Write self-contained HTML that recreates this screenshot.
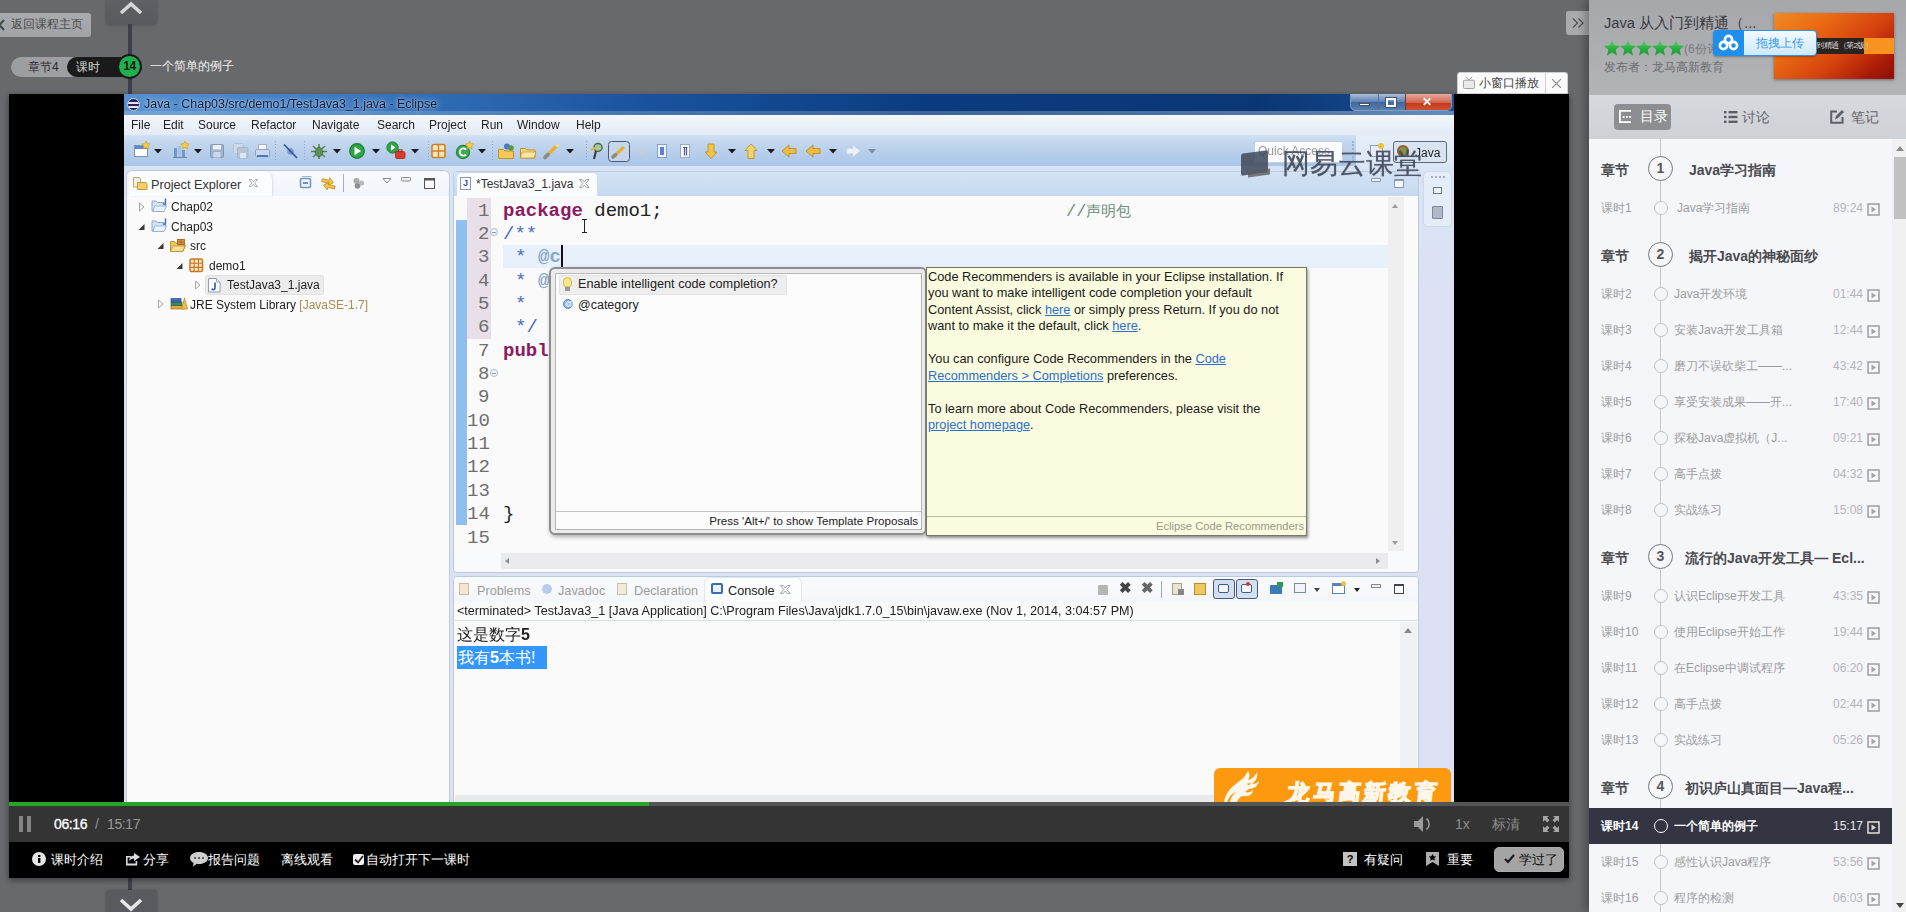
<!DOCTYPE html>
<html>
<head>
<meta charset="utf-8">
<title>Java</title>
<style>
*{box-sizing:border-box;margin:0;padding:0}
html,body{width:1906px;height:912px;overflow:hidden}
body{font-family:"Liberation Sans",sans-serif;font-size:13px;color:#333;position:relative;
background:#68696d}
.abs{position:absolute}
/* top-left */
#back{left:-4px;top:13px;width:95px;height:24px;background:linear-gradient(180deg,#a9aaad,#a2a3a6);border-radius:3px;color:#494b4f;font-size:12px;line-height:23px;padding-left:15px}
#uptab{left:106px;top:-4px;width:51px;height:29px;background:linear-gradient(180deg,#606166,#595a5f);border-radius:4px;box-shadow:0 0 3px rgba(0,0,0,.25)}
#vline1{left:128px;top:24px;width:4px;height:70px;background:#3e3f4b}
#vline2{left:128px;top:878px;width:4px;height:14px;background:#3e3f4b}
#downtab{left:106px;top:890px;width:51px;height:28px;background:#5a5b60;border-radius:4px;box-shadow:0 0 3px rgba(0,0,0,.25)}
#chap{left:11px;top:57px;width:70px;height:20px;background:#9d9ea1;border-radius:10px;color:#2b2c31;font-size:12px;line-height:20px;padding-left:17px}
#less{left:67px;top:57px;width:70px;height:20px;background:#1a1a1a;border-radius:10px;color:#d8d8d8;font-size:12px;line-height:20px;padding-left:9px}
#num{left:117px;top:54px;width:25px;height:25px;border-radius:50%;background:#21b04e;border:2px solid #1a1a1a;color:#0d1a10;font-size:12px;font-weight:bold;line-height:21px;text-align:center;letter-spacing:-.3px}
#ltitle{left:150px;top:58px;color:#f2f2f2;font-size:12px;line-height:17px}

/* eclipse */
#eclipse{left:124px;top:94px;width:1330px;height:708px;overflow:hidden;background:linear-gradient(180deg,#d3e2f4 0,#d9e4f5 14%,#dde1f3 28%,#dde0f3 100%)}
#ec{position:absolute;left:-124px;top:-94px;width:1906px;height:912px;font-size:12px;color:#222;filter:blur(.45px)}
#ec div,#ec span,#ec i,#ec b{position:absolute}
#ec .t{white-space:nowrap;line-height:16px}
#etitle{left:124px;top:94px;width:1330px;height:21px;background:linear-gradient(90deg,#5590cf 0,#3d7bc2 14%,#19529c 40%,#0c3c80 60%,#0a3674 85%,#1a4f92 100%)}
#emenu{left:124px;top:115px;width:1330px;height:20px;background:linear-gradient(180deg,#f4f7fc,#e3ebf6)}
#etool{left:124px;top:135px;width:1330px;height:31px;background:linear-gradient(180deg,#d3e2f4 0,#c2d6ee 25%,#a9c5e7 100%)}
.panel{background:#fbfbfb;border:1px solid #b9cbe0;border-radius:4px}
#ec .code{font-family:"Liberation Mono",monospace;font-size:19px;line-height:24px;margin-top:1px}
#ec .kw{position:static;color:#8b1a62;font-weight:bold}
#ec .lk{position:static;color:#2a6fd0;text-decoration:underline}
#ec .doc{font-size:12.75px;color:#1a1a1a}
/* video frame */
#vwrap{left:9px;top:94px;width:1560px;height:784px;background:#000;box-shadow:0 2px 6px rgba(0,0,0,.45)}
#ctrl{left:0;top:708px;width:1560px;height:40px;background:#343434}
#prog{left:0;top:0;width:1560px;height:4px;background:#555}
#prog i{display:block;width:640px;height:4px;background:#29a329}
#tool{left:0;top:748px;width:1560px;height:36px;background:#000;color:#fff;font-size:13px}
.tl{top:9px;font-size:13px;line-height:17px;color:#fff;white-space:nowrap}
/* mini window tab */
#mini{left:1457px;top:72px;width:111px;height:22px;background:#fafafa;border:1px solid #d0d0d0;border-radius:3px 3px 0 0;font-size:12px;color:#444;line-height:20px}
/* sidebar */
#side{left:1589px;top:0;width:317px;height:912px;background:#f5f6fa;box-shadow:-3px 0 9px rgba(0,0,0,.33)}
#shead{left:0;top:0;width:317px;height:95px;background:linear-gradient(180deg,#a6a7ab,#b3b4b8)}
#stabs{left:0;top:95px;width:317px;height:44px;background:linear-gradient(180deg,#d6d9de,#ced1d6)}
#toggle{left:1566px;top:11px;width:24px;height:24px;background:#a9aaad;border-radius:3px 0 0 3px}
</style>
</head>
<body>
<div id="back" class="abs"><svg class="abs" style="left:2px;top:6px" width="7" height="12" viewBox="0 0 7 12"><path d="M6 1L1.500 6 6 11" stroke="#4a4c50" stroke-width="2.200" fill="none"/></svg>返回课程主页</div>
<div id="uptab" class="abs"><svg class="abs" style="left:13px;top:5px" width="24" height="14" viewBox="0 0 24 14"><path d="M2 12L12 3l10 9" stroke="#d6d6d8" stroke-width="3.600" fill="none"/></svg></div>
<div id="vline1" class="abs"></div>
<div id="vline2" class="abs"></div>
<div id="downtab" class="abs"><svg class="abs" style="left:13px;top:8px" width="24" height="14" viewBox="0 0 24 14"><path d="M2 2l10 9 10-9" stroke="#e8e8e8" stroke-width="3.600" fill="none"/></svg></div>
<div id="chap" class="abs">章节4</div>
<div id="less" class="abs">课时</div>
<div id="num" class="abs">14</div>
<div id="ltitle" class="abs">一个简单的例子</div>

<div id="vwrap" class="abs">
  
  <div id="ctrl" class="abs"><div id="prog" class="abs"><i></i></div>
<i class="abs" style="left:10px;top:14px;width:4px;height:16px;background:#858585"></i><i class="abs" style="left:18px;top:14px;width:4px;height:16px;background:#858585"></i>
<div class="abs" style="left:45px;top:13px;font-size:14px;line-height:18px;color:#fff;letter-spacing:-.4px;white-space:nowrap;-webkit-text-stroke:.3px #fff">06:16</div>
<div class="abs" style="left:86px;top:13px;font-size:14px;line-height:18px;color:#8f8f8f;white-space:nowrap">/</div>
<div class="abs" style="left:98px;top:13px;font-size:14px;line-height:18px;color:#9a9a9a;letter-spacing:-.4px;white-space:nowrap">15:17</div>
<svg class="abs" style="left:1404px;top:12px" width="20" height="20" viewBox="0 0 20 20"><path d="M1 7h4l5-5v16l-5-5H1z" fill="#9a9a9a"/><path d="M13.5 4.5a7 7 0 0 1 0 11" fill="none" stroke="#9a9a9a" stroke-width="1.6"/></svg>
<div class="abs" style="left:1446px;top:13px;font-size:14px;line-height:18px;color:#8c8c8c">1x</div>
<div class="abs" style="left:1483px;top:13px;font-size:14px;line-height:18px;color:#8c8c8c;white-space:nowrap">标清</div>
<svg class="abs" style="left:1534px;top:14px" width="16" height="16" viewBox="0 0 19 19" fill="#a6a6a6"><path d="M0 0h7L4.8 2.2 7.6 5 5 7.6 2.2 4.8 0 7zM19 0v7l-2.2-2.2L14 7.6 11.4 5l2.8-2.8L12 0zM0 19v-7l2.2 2.2L5 11.4 7.6 14l-2.8 2.8L7 19zM19 19h-7l2.2-2.2-2.8-2.8 2.6-2.6 2.8 2.8L19 12z"/></svg>
</div>
  <div id="tool" class="abs">
<svg class="abs" style="left:23px;top:10px" width="14" height="14" viewBox="0 0 14 14"><circle cx="7" cy="7" r="7" fill="#e6e6e6"/><rect x="6" y="6" width="2.4" height="5" fill="#000"/><rect x="6" y="3" width="2.4" height="2" fill="#000"/></svg>
<div class="abs tl" style="left:42px">课时介绍</div>
<svg class="abs" style="left:116px;top:11px" width="15" height="13" viewBox="0 0 15 13"><path d="M1 3h5v1.6H2.6v6h8V8h1.6v4.6H1z" fill="#ddd"/><path d="M9 0l6 4-6 4V5.4C6.5 5.4 5 6.5 4 8.5 4.2 5 6 2.8 9 2.6z" fill="#ddd"/></svg>
<div class="abs tl" style="left:134px">分享</div>
<svg class="abs" style="left:181px;top:10px" width="18" height="15" viewBox="0 0 18 15"><path d="M9 0c5 0 9 2.6 9 6s-4 6-9 6c-.8 0-1.5 0-2.2-.2L3 14.5l.6-3.6C1.400 9.800 0 8 0 6c0-3.400 4-6 9-6z" fill="#d0d0d0"/><circle cx="5" cy="6" r="1.100" fill="#444"/><circle cx="9" cy="6" r="1.100" fill="#444"/><circle cx="13" cy="6" r="1.100" fill="#444"/></svg>
<div class="abs tl" style="left:199px">报告问题</div>
<div class="abs tl" style="left:272px">离线观看</div>
<div class="abs" style="left:344px;top:12px;width:11px;height:11px;background:#f2f2f2;border-radius:2px"></div>
<svg class="abs" style="left:345px;top:13px" width="10" height="9" viewBox="0 0 10 9"><path d="M1 4.500l3 3 5-6.500" stroke="#222" stroke-width="1.800" fill="none"/></svg>
<div class="abs tl" style="left:357px">自动打开下一课时</div>
<div class="abs" style="left:1334px;top:10px;width:14px;height:14px;background:#c2c2c2;color:#000;font-size:11px;font-weight:bold;line-height:14px;text-align:center">?</div>
<div class="abs tl" style="left:1355px">有疑问</div>
<svg class="abs" style="left:1417px;top:10px" width="13" height="14" viewBox="0 0 13 14"><path d="M0 0h13v14l-6.500-4L0 14z" fill="#adadad"/><path d="M6.500 2l1.200 2.300 2.500.3-1.800 1.700.5 2.500-2.400-1.300-2.400 1.300.5-2.500L2.800 4.600l2.500-.3z" fill="#000"/></svg>
<div class="abs tl" style="left:1438px">重要</div>
<div class="abs" style="left:1485px;top:5px;width:70px;height:25px;background:#a4a4a4;border:1px solid #acacac;border-radius:5px"></div>
<svg class="abs" style="left:1495px;top:12px" width="11" height="10" viewBox="0 0 11 10"><path d="M1 5l3 3 6-7" stroke="#1a1a1a" stroke-width="2.200" fill="none"/></svg>
<div class="abs" style="left:1510px;top:9px;font-size:13px;line-height:17px;color:#111;white-space:nowrap">学过了</div>
</div>
</div>
<div id="eclipse" class="abs"><div id="ec">
<div id="etitle"></div><div style="left:124px;top:111px;width:1330px;height:4px;background:linear-gradient(90deg,rgba(200,220,245,.25),rgba(150,178,212,.35) 60%,rgba(150,178,212,.6))"></div>
<div id="emenu"></div>
<div id="etool"></div>
<div style="left:127px;top:98px;width:13px;height:13px;border-radius:50%;background:#2c2255;border:1px solid #c8d4ea;overflow:hidden"><i style="left:0;top:3px;width:13px;height:2px;background:#dfe4f5"></i><i style="left:0;top:7px;width:13px;height:2px;background:#dfe4f5"></i></div>
<div class="t" style="left:144px;top:96px;font-size:12.45px;color:#0c1c3c;text-shadow:0 0 6px rgba(255,255,255,.75),0 0 2px rgba(255,255,255,.5)">Java - Chap03/src/demo1/TestJava3_1.java - Eclipse</div>
<div style="left:1350px;top:93px;width:102px;height:18px;border:1px solid #7f9fc6;border-radius:0 0 5px 5px;background:linear-gradient(180deg,#a9bedb,#5f81b0 50%,#3f669c 51%,#5a7fb0);overflow:hidden"><i style="left:54px;top:0;width:48px;height:18px;background:linear-gradient(180deg,#e9a99a,#d1624a 50%,#c13a1c 51%,#d2583a);border-left:1px solid #6a3b38"></i><i style="left:27px;top:0;width:1px;height:18px;background:#50709e"></i><i style="left:8px;top:9px;width:11px;height:3px;background:#fff;border:1px solid #456"></i><i style="left:35px;top:4px;width:10px;height:9px;border:2px solid #fff;outline:1px solid #456"></i><b class="t" style="left:71px;top:0;color:#fff;font-size:12px;line-height:16px">✕</b></div>
<div class="t" style="left:131px;top:117px">File</div><div class="t" style="left:163px;top:117px">Edit</div><div class="t" style="left:198px;top:117px">Source</div><div class="t" style="left:251px;top:117px">Refactor</div><div class="t" style="left:312px;top:117px">Navigate</div><div class="t" style="left:377px;top:117px">Search</div><div class="t" style="left:429px;top:117px">Project</div><div class="t" style="left:481px;top:117px">Run</div><div class="t" style="left:517px;top:117px">Window</div><div class="t" style="left:576px;top:117px">Help</div>
<svg style="position:absolute;left:124px;top:136px" width="780" height="30" viewBox="124 136 780 30"><rect x="134.500" y="145.500" width="13" height="11" fill="#fdfdfd" stroke="#7d94b5"/><rect x="135" y="146" width="12" height="3" fill="#5b8ad0"/><path d="M146 141l1.300 2.600 2.900.4-2.100 2 .5 2.900-2.600-1.400-2.600 1.400.5-2.900-2.100-2 2.900-.4z" fill="#f7cc3d" stroke="#c99a22" stroke-width=".6"/><path d="M154 149h8l-4 4.500z" fill="#1a1a1a"/><rect x="174" y="148" width="3" height="9" fill="#7397cc"/><rect x="178" y="146" width="3" height="11" fill="#a9c0e0"/><rect x="182" y="150" width="3" height="7" fill="#7397cc"/><path d="M173 157.500h14" stroke="#6a86b0"/><path d="M185 141l1.300 2.600 2.900.4-2.100 2 .5 2.900-2.600-1.400-2.600 1.400.5-2.900-2.100-2 2.900-.4z" fill="#f7cc3d" stroke="#c99a22" stroke-width=".6"/><path d="M194 149h8l-4 4.500z" fill="#1a1a1a"/><rect x="210.500" y="144.500" width="13" height="13" rx="1" fill="#9fb2cc" stroke="#8599b8"/><rect x="213" y="145" width="8" height="4.500" fill="#eaf0f8"/><rect x="213.500" y="152" width="7" height="5.500" fill="#cfdae8"/><rect x="233.500" y="143.500" width="10" height="10" rx="1" fill="#cfd8e6" stroke="#b4c0d4"/><rect x="237.500" y="147.500" width="10.500" height="10.500" rx="1" fill="#b6c4d8" stroke="#a3b3ca"/><rect x="240" y="153" width="6" height="5" fill="#dde5f0"/><rect x="258.500" y="144.500" width="8" height="6" fill="#f4f7fb" stroke="#9fb0c8"/><rect x="255.500" y="149.500" width="14" height="7" rx="1" fill="#cbd8ea" stroke="#8ea4c4"/><rect x="257" y="155" width="11" height="2" fill="#4a78c0"/><path d="M275.5 141v20" stroke="#8fa6c6" stroke-dasharray="1 2"/><circle cx="290.500" cy="151.500" r="3.300" fill="#7a9ad6"/><path d="M284 144.500l13 13.500" stroke="#2f55a0" stroke-width="1.700"/><path d="M304.5 141v20" stroke="#8fa6c6" stroke-dasharray="1 2"/><g stroke="#557f4c" stroke-width="1.500"><path d="M313 146l12 11M325 146l-12 11M311 151.500h16M319 144v15"/></g><ellipse cx="319" cy="152" rx="3.600" ry="4.600" fill="#5f8f55" stroke="#3f6a3a" stroke-width=".8"/><path d="M333 149h8l-4 4.500z" fill="#1a1a1a"/><circle cx="357" cy="151" r="7.300" fill="#2ea645" stroke="#1b7a30" stroke-width="1.200"/><path d="M354.500 146.800v8.400l6.600-4.200z" fill="#fff"/><path d="M372 149h8l-4 4.500z" fill="#1a1a1a"/><circle cx="392.500" cy="147.500" r="5.600" fill="#2ea645" stroke="#1b7a30"/><path d="M391 144.500v6l4.500-3z" fill="#fff"/><rect x="395.500" y="151.500" width="9.500" height="7" rx="1.500" fill="#dc3a2c" stroke="#a8281d" stroke-width=".8"/><rect x="398.500" y="149.800" width="3.500" height="2" fill="none" stroke="#a8281d"/><path d="M411 149h8l-4 4.500z" fill="#1a1a1a"/><path d="M428.5 141v20" stroke="#8fa6c6" stroke-dasharray="1 2"/><rect x="432" y="144.500" width="13" height="13" rx="1.500" fill="#fbe3b8" stroke="#c98230" stroke-width="1.600"/><path d="M438.500 144.500v13M432 151h13" stroke="#c98230" stroke-width="1.400"/><circle cx="463" cy="152" r="6.600" fill="#3eaa4e" stroke="#27853a" stroke-width="1.200"/><path d="M466 149.500a3.600 3.600 0 1 0 0 5" fill="none" stroke="#fff" stroke-width="1.800"/><path d="M469.5 141l1.300 2.600 2.900.4-2.100 2 .5 2.900-2.600-1.400-2.600 1.400.5-2.900-2.100-2 2.900-.4z" fill="#f7cc3d" stroke="#c99a22" stroke-width=".6"/><path d="M478 149h8l-4 4.500z" fill="#1a1a1a"/><path d="M492.5 141v20" stroke="#8fa6c6" stroke-dasharray="1 2"/><path d="M498.500 149.500h5l1.500 1.500h8.500v7.500h-15z" fill="#f4c85a" stroke="#c4902a"/><circle cx="507" cy="146.500" r="3" fill="#4a78c8"/><circle cx="511" cy="148" r="2.800" fill="#5a9a3a"/><path d="M520.500 148.500h5l1.500 1.500h8v8h-14.500z" fill="#f8d880" stroke="#c4902a"/><path d="M522 152h14l-2 6h-13.500z" fill="#fbe6a6" stroke="#c4902a" stroke-width=".7"/><path d="M545 157.500l11-11" stroke="#e5b040" stroke-width="3.600" stroke-linecap="round"/><path d="M545 157.500l3-3" stroke="#8a8a8a" stroke-width="3.600" stroke-linecap="round"/><circle cx="557" cy="145.500" r="1.600" fill="#f7e08a"/><path d="M566 149h8l-4 4.500z" fill="#1a1a1a"/><path d="M586.5 141v20" stroke="#8fa6c6" stroke-dasharray="1 2"/><circle cx="598" cy="147.500" r="4" fill="#a8c89a" stroke="#4d6a40" stroke-width="1.500"/><path d="M596 151l-2 8" stroke="#3a3a3a" stroke-width="2"/><path d="M591 150l4-2" stroke="#e8b84a" stroke-width="2"/><rect x="608.500" y="141.500" width="21" height="20" rx="3" fill="#c5d5ea" stroke="#4a5a72"/><path d="M613 157l10-9" stroke="#e5b040" stroke-width="3.400" stroke-linecap="round"/><path d="M613 157l2.500-2.300" stroke="#8a8a8a" stroke-width="3.400" stroke-linecap="round"/><path d="M634 153c2-5 7-5 9-3l2-2v6h-6l2-2c-2-1.500-4-1-7 1z" fill="#c9cdd4"/><rect x="657.500" y="144.500" width="9" height="13" fill="#eef2fa" stroke="#8a9fc8"/><rect x="660" y="147" width="4" height="8" fill="#5f80cc"/><rect x="680.500" y="144.500" width="9" height="13" fill="#f8f9fc" stroke="#9aa8c0"/><path d="M683 147.500h4.500M684.500 147.500v8M686.500 147.500v8" stroke="#4a5a90" stroke-width="1.200" fill="none"/><path d="M708 144h6v8h3l-6 6.500-6-6.500h3z" fill="#f3c544" stroke="#b88a20" stroke-width=".8"/><path d="M728 149h8l-4 4.500z" fill="#1a1a1a"/><path d="M748 158.500h6v-8h3l-6-6.500-6 6.500h3z" fill="#f5d26a" stroke="#b88a20" stroke-width=".8"/><path d="M767 149h8l-4 4.500z" fill="#1a1a1a"/><path d="M782 151l7-6v3.500h7v5h-7v3.500z" fill="#efba42" stroke="#b8861f" stroke-width=".8"/><path d="M806 151l7-6v3.500h7v5h-7v3.500z" fill="#efba42" stroke="#b8861f" stroke-width=".8"/><path d="M829 149h8l-4 4.500z" fill="#1a1a1a"/><path d="M860 151l-7-5.500v3h-6v5h6v3z" fill="#eef2f8" stroke="#d5dde8" stroke-width=".8"/><path d="M868 149h8l-4 4.500z" fill="#7d8da3"/></svg><div style="left:1356px;top:135px;width:98px;height:32px;background:linear-gradient(180deg,#e6eef9,#dbe6f4)"></div><div style="left:1254px;top:141px;width:89px;height:22px;background:#f9fbfd;border:1px solid #c2d0e2;border-radius:2px"></div><div class="t" style="left:1258px;top:143px;color:#9a9a9a;font-size:12px">Quick Access</div><i style="left:1352px;top:141px;width:1px;height:20px;border-left:2px dotted #9fb2cc"></i><i style="left:1370px;top:145px;width:13px;height:12px;background:#e8eef8;border:1px solid #8aa0c0"></i><i style="left:1378px;top:143px;width:6px;height:6px;background:#f0c040;border-radius:50%"></i><div style="left:1393px;top:141px;width:54px;height:22px;border:1px solid #5a6a80;border-radius:3px;background:#d9e4f2"></div><i style="left:1397px;top:145px;width:12px;height:12px;background:#7a9a4a;border-radius:50%;border:2px solid #a0522d"></i><div class="t" style="left:1415px;top:145px;font-size:12px;color:#222">Java</div>
<div class="panel" style="left:126px;top:170px;width:324px;height:641px;border-radius:6px"></div><div style="left:127px;top:171px;width:322px;height:25px;background:linear-gradient(180deg,#f8fafd,#f1f5fb);border-radius:6px 6px 0 0"></div><div style="left:129px;top:171px;width:143px;height:25px;background:#fcfdfe;border-radius:6px 8px 0 0;box-shadow:1px 0 2px rgba(160,180,210,.35)"></div><div class="t" style="left:151px;top:177px;color:#333;font-size:12.7px">Project Explorer</div><svg style="position:absolute;left:124px;top:168px" width="330" height="150" viewBox="124 168 330 150"><path d="M133.500 177.500h6l1 1.500v8h-7z" fill="#f3f0e6" stroke="#b8a878"/><path d="M137.500 182.500h8.500l1 1.500v5.500h-9.500z" fill="#f6cf6a" stroke="#c49a3a"/><path d="M249 179.500l3 3.500-3 3.500h2.500l1.800-2.200 1.800 2.200h2.500l-3-3.500 3-3.500h-2.500l-1.800 2.200-1.800-2.200z" fill="#fdfdfd" stroke="#9a9a9a" stroke-width=".8"/><rect x="300.500" y="178.500" width="10" height="9" rx="1.500" fill="#eef4fb" stroke="#6f98c8" stroke-width="1.600"/><path d="M303 183h5" stroke="#35588a" stroke-width="1.300"/><path d="M302 176.500h9.500" stroke="#9ab8dc"/><path d="M322 180h7v-2.500l4.500 4-4.500 4V183h-7z" fill="#f3c544" stroke="#b8861f" stroke-width=".7" transform="rotate(12 328 181)"/><path d="M335 187.500h-7v2.500l-4.500-4 4.500-4v2.500h7z" fill="#f3c544" stroke="#b8861f" stroke-width=".7" transform="rotate(12 328 186)"/><path d="M343.500 174v18" stroke="#a3afc0"/><circle cx="356.500" cy="181" r="3" fill="#a9a9a9"/><circle cx="361.500" cy="183" r="2.600" fill="#b9b9b9"/><circle cx="357.500" cy="186" r="2.800" fill="#8f8f8f"/><path d="M383 178.500h8l-4 4.500z" fill="#f8f8f8" stroke="#8a8a8a"/><rect x="401.500" y="177.500" width="9" height="3.500" rx="1" fill="#eee" stroke="#8a8a8a"/><rect x="424.500" y="178.500" width="10" height="10" fill="#fbfbfb" stroke="#555"/><path d="M424.500 179.500h10" stroke="#555" stroke-width="2"/><path d="M139.5 203v8l4.500-4z" fill="#fbfbfb" stroke="#a6a6a6"/><path d="M152 201h4l1.200 1.500h6.800v2h2l-2.500 6.500h-11.500z" fill="#d5e5f6" stroke="#7fa0cc" stroke-width=".9"/><path d="M154.5 206h12l-2.300 5.500h-11.200z" fill="#eaf3fc" stroke="#7fa0cc" stroke-width=".7"/><path d="M165.5 198.5v4.500c0 1.500-2 1.500-2.500.5" fill="none" stroke="#3f6fc0" stroke-width="1.500"/><path d="M144.5 230v-6l-6 6z" fill="#3a3a3a"/><path d="M152 221h4l1.200 1.500h6.800v2h2l-2.500 6.500h-11.500z" fill="#d5e5f6" stroke="#7fa0cc" stroke-width=".9"/><path d="M154.5 226h12l-2.300 5.500h-11.200z" fill="#eaf3fc" stroke="#7fa0cc" stroke-width=".7"/><path d="M165.5 218.5v4.500c0 1.500-2 1.500-2.500.5" fill="none" stroke="#3f6fc0" stroke-width="1.500"/><path d="M163.5 249v-6l-6 6z" fill="#3a3a3a"/><path d="M170.500 241.500h4l1.200 1.500h7.800v2h2l-2.500 6.500h-12.500z" fill="#f1c75a" stroke="#b98a2a" stroke-width=".9"/><path d="M173 246h12l-2.300 5.500h-12.200z" fill="#f9e09a" stroke="#b98a2a" stroke-width=".7"/><rect x="177.500" y="239.500" width="7" height="5" fill="#d8924a" stroke="#9a5a1a" stroke-width=".8"/><path d="M181 239.500v5M177.500 242h7" stroke="#9a5a1a" stroke-width=".6"/><path d="M182.5 269v-6l-6 6z" fill="#3a3a3a"/><rect x="190" y="259" width="12.500" height="12.500" rx="1.500" fill="#fbe3b8" stroke="#c47a2a" stroke-width="1.500"/><path d="M194.200 259v12.500M198.400 259v12.500M190 263.200h12.500M190 267.400h12.500" stroke="#c47a2a" stroke-width="1.100"/><rect x="205.500" y="275.500" width="118" height="19" rx="2" fill="#ececec" stroke="#e0e0e0"/><path d="M195.5 281v8l4.500-4z" fill="#fbfbfb" stroke="#a6a6a6"/><path d="M208.500 278.500h8l3.500 3.500v10h-11.500z" fill="#fdfdfd" stroke="#8c9cb8"/><path d="M216.500 278.500v3.500h3.500" fill="#e4e9f2" stroke="#8c9cb8" stroke-width=".8"/><path d="M215 282.500v5.500c0 2-2.600 2-3.200.6" fill="none" stroke="#3a62b0" stroke-width="1.700"/><path d="M158.5 300v8l4.500-4z" fill="#fbfbfb" stroke="#a6a6a6"/><rect x="171" y="305.500" width="13" height="3.500" fill="#e8a838" stroke="#8a5a1a" stroke-width=".6"/><rect x="171" y="302" width="11" height="3.500" fill="#3f8a5a" stroke="#2a5a3a" stroke-width=".6"/><rect x="171" y="298.500" width="10" height="3.500" fill="#3a6ab8" stroke="#2a4a8a" stroke-width=".6"/><path d="M181.500 309l3-11 3 11z" fill="#f0c040" stroke="#a8781a" stroke-width=".6"/></svg><div class="t" style="left:171px;top:199px">Chap02</div><div class="t" style="left:171px;top:219px">Chap03</div><div class="t" style="left:190px;top:238px">src</div><div class="t" style="left:209px;top:258px">demo1</div><div class="t" style="left:227px;top:277px">TestJava3_1.java</div><div class="t" style="left:190px;top:297px">JRE System Library <span style="position:static;color:#a98a55">[JavaSE-1.7]</span></div>
<div class="panel" style="left:453px;top:171px;width:966px;height:402px;background:#f9fafb"></div><div style="left:454px;top:172px;width:964px;height:24px;background:linear-gradient(180deg,#d4e3f5,#c4d9f0);border-radius:4px 4px 0 0"></div><div style="left:456px;top:172px;width:142px;height:24px;background:#fbfcfe;border-radius:5px 5px 0 0;border:1px solid #cfdbe9;border-bottom:0"></div><i style="left:460px;top:177px;width:11px;height:13px;background:#fdfdfd;border:1px solid #8898b8"></i><b class="t" style="left:463px;top:175px;font-size:9px;color:#3a5aa0">J</b><div class="t" style="left:476px;top:176px;color:#333">*TestJava3_1.java</div><svg style="position:absolute;left:579px;top:179px" width="11" height="9" viewBox="249 179 9 8"><path d="M249 179.500l3 3.500-3 3.500h2.500l1.800-2.200 1.800 2.200h2.500l-3-3.500 3-3.500h-2.500l-1.800 2.200-1.800-2.200z" fill="#fdfdfd" stroke="#9a9a9a" stroke-width=".8"/></svg><i style="left:1371px;top:178px;width:10px;height:4px;border:1px solid #8a98ac;background:#eef2f8;border-radius:1px"></i><i style="left:1394px;top:179px;width:10px;height:9px;border:1px solid #8a98ac;border-top-width:2px;background:#f4f7fb"></i><i style="left:1395px;top:180px;width:11px;height:9px;border:1px solid #7a8aa0;background:#eef2f8;display:none"></i><div style="left:454px;top:196px;width:964px;height:355px;background:#fafafa"></div><div style="left:456px;top:220px;width:11px;height:305px;background:#8fbfee"></div><div style="left:467px;top:198px;width:24px;height:141px;background:#e9dfe9"></div><div style="left:503px;top:245px;width:885px;height:23px;background:#e8f0fb"></div><div style="left:1388px;top:197px;width:16px;height:354px;background:#efefef"></div><i style="left:1392px;top:204px;border:3px solid transparent;border-bottom:4px solid #9a9a9a;border-top:0"></i><i style="left:1392px;top:541px;border:3px solid transparent;border-top:4px solid #9a9a9a;border-bottom:0"></i><div style="left:501px;top:553px;width:887px;height:16px;background:#ebebed"></div><i style="left:505px;top:558px;border:3px solid transparent;border-right:4px solid #8c8c8c;border-left:0"></i><i style="left:1376px;top:558px;border:3px solid transparent;border-left:4px solid #8c8c8c;border-right:0"></i><div class="t code" style="left:478px;top:198px;color:#6e6e6e">1</div><div class="t code" style="left:478px;top:221px;color:#6e6e6e">2</div><div class="t code" style="left:478px;top:244px;color:#6e6e6e">3</div><div class="t code" style="left:478px;top:268px;color:#6e6e6e">4</div><div class="t code" style="left:478px;top:291px;color:#6e6e6e">5</div><div class="t code" style="left:478px;top:314px;color:#6e6e6e">6</div><div class="t code" style="left:478px;top:338px;color:#6e6e6e">7</div><div class="t code" style="left:478px;top:361px;color:#6e6e6e">8</div><div class="t code" style="left:478px;top:384px;color:#6e6e6e">9</div><div class="t code" style="left:467px;top:408px;color:#6e6e6e">10</div><div class="t code" style="left:467px;top:431px;color:#6e6e6e">11</div><div class="t code" style="left:467px;top:454px;color:#6e6e6e">12</div><div class="t code" style="left:467px;top:478px;color:#6e6e6e">13</div><div class="t code" style="left:467px;top:501px;color:#6e6e6e">14</div><div class="t code" style="left:467px;top:525px;color:#6e6e6e">15</div><div class="t code" style="left:503px;top:198px;"><span class="kw">package</span> demo1;</div><div class="t code" style="left:1066px;top:198px;color:#6d8f7c;font-size:17px">//<span style="position:static;font-family:'Liberation Sans',sans-serif;font-size:15px">声明包</span></div><div class="t code" style="left:503px;top:221px;color:#4a6ec0">/**</div><div class="t code" style="left:515px;top:244px;color:#4a6ec0">*</div><div class="t code" style="left:538px;top:244px;color:#8aa6c8;font-weight:bold">@c</div><i style="left:561px;top:245px;width:2px;height:23px;background:#111"></i><div class="t code" style="left:515px;top:268px;color:#4a6ec0">*</div><div class="t code" style="left:538px;top:268px;color:#8aa6c8;font-weight:bold">@</div><div class="t code" style="left:515px;top:291px;color:#4a6ec0">*</div><div class="t code" style="left:515px;top:314px;color:#4a6ec0">*/</div><div class="t code" style="left:503px;top:338px;"><span class="kw">public</span></div><div class="t code" style="left:503px;top:501px;">}</div><i style="left:490px;top:228px;width:8px;height:8px;border-radius:50%;border:1px solid #b0bccb;background:#f2f5f9"></i><i style="left:492px;top:232px;width:4px;height:1px;background:#8a9ab0"></i><i style="left:490px;top:369px;width:8px;height:8px;border-radius:50%;border:1px solid #b0bccb;background:#f2f5f9"></i><i style="left:492px;top:373px;width:4px;height:1px;background:#8a9ab0"></i><i style="left:584px;top:219px;width:1px;height:14px;background:#222"></i><i style="left:582px;top:219px;width:5px;height:1px;background:#222"></i><i style="left:582px;top:232px;width:5px;height:1px;background:#222"></i>
<div style="left:549px;top:267px;width:378px;height:268px;background:#ebebeb;border:2px solid #8e8e8e;border-radius:6px;box-shadow:1px 2px 4px rgba(0,0,0,.3)"></div><div style="left:555px;top:273px;width:367px;height:257px;background:#fcfcfc;border:1px solid #b5b5b5"></div><div style="left:556px;top:511px;width:365px;height:1px;background:#c4c4c4"></div><div style="left:559px;top:275px;width:228px;height:20px;background:#eeeeee;border:1px solid #e2e2e2;border-radius:2px"></div><i style="left:563px;top:277px;width:9px;height:10px;border-radius:5px 5px 3px 3px;background:#fbe78c;border:1px solid #d9b648"></i><i style="left:565px;top:287px;width:5px;height:4px;background:#9a9a9a"></i><div class="t" style="left:578px;top:276px;font-size:12.7px">Enable intelligent code completion?</div><i style="left:563px;top:299px;width:10px;height:10px;border-radius:50%;background:#8ab4e8;border:1px solid #5a8ac8"></i><b class="t" style="left:565px;top:296px;font-size:8px;color:#fff">@</b><div class="t" style="left:578px;top:297px;font-size:12.5px">@category</div><div class="t" style="left:708px;top:513px;font-size:11.6px;width:214px;left:704px;;text-align:right">Press 'Alt+/' to show Template Proposals</div><div style="left:926px;top:267px;width:381px;height:269px;background:#fbfbdf;border:1px solid #77776a;box-shadow:1px 2px 3px rgba(0,0,0,.45)"></div><div class="t doc" style="left:928px;top:269px">Code Recommenders is available in your Eclipse installation. If</div><div class="t doc" style="left:928px;top:285px">you want to make intelligent code completion your default</div><div class="t doc" style="left:928px;top:302px">Content Assist, click <span class="lk">here</span> or simply press Return. If you do not</div><div class="t doc" style="left:928px;top:318px">want to make it the default, click <span class="lk">here</span>.</div><div class="t doc" style="left:928px;top:351px">You can configure Code Recommenders in the <span class="lk">Code</span></div><div class="t doc" style="left:928px;top:368px"><span class="lk">Recommenders &gt; Completions</span> preferences.</div><div class="t doc" style="left:928px;top:401px">To learn more about Code Recommenders, please visit the</div><div class="t doc" style="left:928px;top:417px"><span class="lk">project homepage</span>.</div><div style="left:927px;top:516px;width:379px;height:1px;background:#b9b9a5"></div><div class="t" style="left:1100px;top:518px;width:204px;text-align:right;color:#9a9a8a;font-size:11.2px">Eclipse Code Recommenders</div>
<div class="panel" style="left:453px;top:576px;width:966px;height:240px;background:#fafafa"></div><div style="left:454px;top:577px;width:964px;height:25px;background:linear-gradient(180deg,#fafbfd,#f3f6fa);border-radius:4px 4px 0 0"></div><div style="left:704px;top:577px;width:98px;height:25px;background:#fcfdfe;border-radius:6px 6px 0 0;border:1px solid #dfe7f1;border-bottom:0"></div><i style="left:459px;top:583px;width:10px;height:12px;background:#f3e6d0;border:1px solid #c9b9a0"></i><div class="t" style="left:477px;top:583px;font-size:12.7px;color:#9c9c9c">Problems</div><i style="left:542px;top:584px;width:10px;height:10px;background:#b9cdea;border-radius:50%"></i><div class="t" style="left:558px;top:583px;font-size:12.7px;color:#9c9c9c">Javadoc</div><i style="left:617px;top:583px;width:10px;height:12px;background:#f0ead8;border:1px solid #c9c0a8"></i><div class="t" style="left:634px;top:583px;font-size:12.7px;color:#9c9c9c">Declaration</div><i style="left:711px;top:583px;width:12px;height:11px;background:#e8f0fb;border:2px solid #3a6ab8;border-radius:2px"></i><div class="t" style="left:728px;top:583px;font-size:12.7px;color:#222">Console</div><svg style="position:absolute;left:780px;top:585px" width="11" height="9" viewBox="249 179 9 8"><path d="M249 179.500l3 3.500-3 3.500h2.500l1.800-2.200 1.800 2.200h2.500l-3-3.500 3-3.500h-2.500l-1.800 2.200-1.800-2.200z" fill="#fdfdfd" stroke="#9a9a9a" stroke-width=".8"/></svg><i style="left:1098px;top:585px;width:10px;height:10px;background:#b5b5b5;border-radius:1px"></i><b class="t" style="left:1119px;top:580px;font-size:15px;color:#444">✖</b><b class="t" style="left:1141px;top:580px;font-size:15px;color:#666">✖</b><i style="left:1161px;top:581px;width:1px;height:17px;background:#9aa8bc;"></i><i style="left:1172px;top:583px;width:10px;height:12px;background:#e9e4d2;border:1px solid #a9a28a"></i><i style="left:1178px;top:589px;width:6px;height:6px;background:#888;"></i><i style="left:1194px;top:583px;width:12px;height:12px;background:#f0c860;border:1px solid #b88a2a"></i><i style="left:1213px;top:579px;width:22px;height:20px;background:#d3e0f0;border:1px solid #4a5a72;border-radius:3px"></i><i style="left:1218px;top:584px;width:11px;height:9px;background:#f4f8fd;border:1px solid #3a5a9a;border-radius:2px"></i><i style="left:1236px;top:579px;width:22px;height:20px;background:#d3e0f0;border:1px solid #4a5a72;border-radius:3px"></i><i style="left:1241px;top:584px;width:11px;height:9px;background:#f4f8fd;border:1px solid #3a5a9a;border-radius:2px"></i><i style="left:1246px;top:582px;width:4px;height:4px;background:#d03a2a;border-radius:2px"></i><i style="left:1270px;top:585px;width:12px;height:9px;background:#3a7ab8;border-radius:1px"></i><i style="left:1277px;top:582px;width:6px;height:5px;background:#2f9a4a;"></i><i style="left:1294px;top:583px;width:12px;height:10px;background:#f2f4f8;border:1px solid #7a8aa0"></i><i style="left:1314px;top:588px;border:3px solid transparent;border-top:4px solid #444;border-bottom:0"></i><i style="left:1332px;top:583px;width:13px;height:11px;background:#fdfdfd;border:1px solid #5a82b8;border-top:3px solid #5a82b8"></i><i style="left:1341px;top:581px;width:5px;height:5px;background:#f0c040;border-radius:50%"></i><i style="left:1354px;top:588px;border:3px solid transparent;border-top:4px solid #222;border-bottom:0"></i><i style="left:1371px;top:584px;width:10px;height:4px;background:#eee;border:1px solid #8a8a8a"></i><i style="left:1394px;top:584px;width:10px;height:10px;border:1px solid #444;border-top:2px solid #444"></i><div class="t" style="left:457px;top:603px;font-size:12.6px;color:#222">&lt;terminated&gt; TestJava3_1 [Java Application] C:\Program Files\Java\jdk1.7.0_15\bin\javaw.exe (Nov 1, 2014, 3:04:57 PM)</div><i style="left:455px;top:620px;width:962px;height:1px;background:#d8dde4;"></i><div class="t" style="left:457px;top:624px;font-size:16px;line-height:21px;color:#222">这是数字<b style="position:static">5</b></div><i style="left:457px;top:646px;width:90px;height:23px;background:#3497fd;"></i><div class="t" style="left:458px;top:647px;font-size:16px;line-height:21px;color:#fff">我有<b style="position:static">5</b>本书!</div><i style="left:1400px;top:622px;width:17px;height:190px;background:#f0f1f3;"></i><i style="left:1404px;top:628px;border:4px solid transparent;border-bottom:5px solid #888;border-top:0"></i><i style="left:455px;top:795px;width:945px;height:10px;background:#e9eaec;"></i><div style="left:1423px;top:171px;width:29px;height:56px;background:#e4edf8;border:1px solid #cbd9ea;border-radius:5px"></div><i style="left:1431px;top:176px;width:14px;height:1px;border-top:2px dotted #9fb2cc"></i><i style="left:1433px;top:187px;width:9px;height:7px;background:#eef2f8;border:1px solid #6a7a90"></i><i style="left:1432px;top:206px;width:11px;height:13px;background:#aeb8c6;border:1px solid #7a8aa0;border-radius:1px"></i><div style="left:1214px;top:768px;width:237px;height:40px;background:#fd990f;border-radius:6px 6px 0 0"></div><div class="t" style="left:1288px;top:779px;font-size:22px;line-height:28px;font-weight:bold;color:#fdf6ea;letter-spacing:3.300px;-webkit-text-stroke:1.300px #fdf6ea;transform:skewX(-6deg)">龙马高新教育</div><svg style="position:absolute;left:1220px;top:768px" width="48" height="36" viewBox="1220 768 48 36"><path d="M1224 803c1-9 6-15 13-20 4-3 8-6 11-12 2 3 2 6 0 9 4-1 7-4 9-8 1 5-1 9-5 12 3 0 5-1 7-3-1 5-5 8-10 8l-4 3c3 1 6 0 8-2 0 4-4 7-9 6-3 0-5 2-6 4-1 1-1 2-1 3h-7c0-4 2-8 6-11-5 2-8 6-9 11z" fill="#fdf6ea"/><path d="M1247 784l4-1.500-2 3z" fill="#fd990f"/></svg>
<div style="left:1241px;top:152px;width:27px;height:22px;background:rgba(66,76,94,.88);border-radius:2px;transform:skewY(-8deg)"></div><div style="left:1248px;top:170px;width:22px;height:6px;background:rgba(90,92,98,.8);transform:skewY(-8deg)"></div><div class="t" style="left:1282px;top:146px;font-size:27.6px;line-height:36px;color:rgba(66,76,94,.85);letter-spacing:0px;text-shadow:0 0 1px rgba(68,72,82,.6)">网易云课堂</div>
<!--ECLIPSE-->
</div></div>
<div id="mini" class="abs"><svg class="abs" style="left:5px;top:4px" width="12" height="12" viewBox="0 0 13 13"><path d="M3 0l3.500 3L10 0" stroke="#9a9a9a" fill="none"/><rect x=".5" y="3.500" width="12" height="9" rx="1" fill="#e9e9e9" stroke="#9a9a9a"/></svg><span class="abs" style="left:21px;top:0;white-space:nowrap">小窗口播放</span><i class="abs" style="left:87px;top:0;width:1px;height:20px;background:#d0d0d0"></i><svg class="abs" style="left:94px;top:6px" width="9" height="9" viewBox="0 0 10 10"><path d="M0 0l10 10M10 0L0 10" stroke="#888" stroke-width="1.200"/></svg></div>
<div id="toggle" class="abs"><svg class="abs" style="left:6px;top:7px" width="12" height="10" viewBox="0 0 12 10"><path d="M1 .500L5.500 5 1 9.500M6.500 .500L11 5 6.500 9.500" stroke="#4f5054" stroke-width="1.200" fill="none"/></svg></div>
<div id="side" class="abs">
  <div id="shead" class="abs"><svg width="0" height="0" style="position:absolute"><defs><linearGradient id="sg" x1="0" y1="0" x2="0" y2="1"><stop offset="0" stop-color="#5fd068"/><stop offset=".55" stop-color="#27b03e"/><stop offset="1" stop-color="#1d9a35"/></linearGradient></defs></svg><div class="abs" style="left:15px;top:13px;font-size:14.7px;line-height:20px;color:#38393d;white-space:nowrap">Java 从入门到精通（...</div><svg class="abs" style="left:15px;top:40px" width="16" height="16" viewBox="0 0 16 16"><path d="M8 0l2.300 5.300 5.700.6-4.300 3.800 1.300 5.700L8 12.500 3 15.400l1.300-5.700L0 5.900l5.700-.6z" fill="url(#sg)"/></svg><svg class="abs" style="left:31px;top:40px" width="16" height="16" viewBox="0 0 16 16"><path d="M8 0l2.300 5.300 5.700.6-4.300 3.800 1.300 5.700L8 12.500 3 15.400l1.300-5.700L0 5.900l5.700-.6z" fill="url(#sg)"/></svg><svg class="abs" style="left:47px;top:40px" width="16" height="16" viewBox="0 0 16 16"><path d="M8 0l2.300 5.300 5.700.6-4.300 3.800 1.300 5.700L8 12.500 3 15.400l1.300-5.700L0 5.900l5.700-.6z" fill="url(#sg)"/></svg><svg class="abs" style="left:63px;top:40px" width="16" height="16" viewBox="0 0 16 16"><path d="M8 0l2.300 5.300 5.700.6-4.300 3.800 1.300 5.700L8 12.500 3 15.400l1.300-5.700L0 5.900l5.700-.6z" fill="url(#sg)"/></svg><svg class="abs" style="left:79px;top:40px" width="16" height="16" viewBox="0 0 16 16"><path d="M8 0l2.300 5.300 5.700.6-4.300 3.800 1.300 5.700L8 12.500 3 15.400l1.300-5.700L0 5.900l5.700-.6z" fill="url(#sg)"/></svg><div class="abs" style="left:95px;top:41px;font-size:12px;line-height:16px;color:#7a7b80;white-space:nowrap">(6份评</div><div class="abs" style="left:15px;top:59px;font-size:12px;line-height:16px;color:#6c6d72;white-space:nowrap">发布者：龙马高新教育</div><div class="abs" style="left:185px;top:13px;width:120px;height:66px;background:linear-gradient(140deg,#f08a22 0,#ea6a14 30%,#d4420d 60%,#a81a07 85%,#8f0d04 100%);box-shadow:0 1px 3px rgba(0,0,0,.4)"></div><div class="abs" style="left:227px;top:38px;width:49px;height:16px;background:#2a2320"></div><div class="abs" style="left:275px;top:38px;width:30px;height:16px;background:#f7931e"></div><div class="abs" style="left:227px;top:40px;font-size:8px;line-height:12px;color:#ddd;white-space:nowrap;letter-spacing:-.5px">到精通（第2版）</div><div class="abs" style="left:124px;top:30px;width:104px;height:26px;border-radius:4px;background:linear-gradient(180deg,#f4faff,#cfe8fb);border:1px solid #2d93ea;box-shadow:0 1px 2px rgba(0,0,0,.3)"></div><div class="abs" style="left:124px;top:30px;width:31px;height:26px;border-radius:4px 0 0 4px;background:#1f8fee"></div><svg class="abs" style="left:129px;top:34px" width="21" height="18" viewBox="0 0 21 18"><g fill="none" stroke="#fff" stroke-width="2.600"><circle cx="10.500" cy="5.500" r="3.600"/><circle cx="5.500" cy="11.500" r="3.600"/><circle cx="15.500" cy="11.500" r="3.600"/></g></svg><div class="abs" style="left:167px;top:35px;font-size:12px;line-height:16px;color:#3a9cf0;white-space:nowrap">拖拽上传</div></div>
  <div id="stabs" class="abs"><div class="abs" style="left:25px;top:9px;width:57px;height:26px;background:#8d8e91;border-radius:4px"></div><svg class="abs" style="left:30px;top:15px" width="13" height="13" viewBox="0 0 14 14"><path d="M13 1H1v12h12" stroke="#fff" stroke-width="2" fill="none"/><rect x="4" y="6.500" width="2" height="2" fill="#fff"/><rect x="7.500" y="6.500" width="2" height="2" fill="#fff"/><rect x="11" y="6.500" width="2" height="2" fill="#fff"/></svg><div class="abs" style="left:51px;top:12px;font-size:14px;line-height:19px;color:#fff;white-space:nowrap">目录</div><svg class="abs" style="left:135px;top:15px" width="14" height="14" viewBox="0 0 14 14" fill="#5e5f64"><rect x="0" y="1" width="2.500" height="2.400"/><rect x="4.500" y="1" width="9" height="2.400"/><rect x="0" y="5.800" width="2.500" height="2.400"/><rect x="4.500" y="5.800" width="9" height="2.400"/><rect x="0" y="10.600" width="2.500" height="2.400"/><rect x="4.500" y="10.600" width="9" height="2.400"/></svg><div class="abs" style="left:153px;top:13px;font-size:14px;line-height:19px;color:#66676c;white-space:nowrap">讨论</div><svg class="abs" style="left:241px;top:15px" width="14" height="14" viewBox="0 0 14 14"><path d="M7 1.500H1.200v11.300h11.300V7" stroke="#5e5f64" stroke-width="2" fill="none"/><path d="M5 9.500l1-3.500L12 0l2 2-6 6z" fill="#5e5f64"/></svg><div class="abs" style="left:262px;top:13px;font-size:14px;line-height:19px;color:#66676c;white-space:nowrap">笔记</div></div>
  <div id="slist" class="abs"><div class="abs" style="left:303px;top:139px;width:14px;height:773px;background:#f1f1f1"></div><div class="abs" style="left:305px;top:157px;width:12px;height:62px;background:#c1c1c1"></div><i class="abs" style="left:307px;top:146px;border:4px solid transparent;border-bottom:5px solid #8a8a8a;border-top:0"></i><i class="abs" style="left:307px;top:903px;border:4px solid transparent;border-top:5px solid #444;border-bottom:0"></i><div class="abs" style="left:71px;top:139px;width:1px;height:773px;background:#c3c4c7"></div><div class="abs" style="left:12px;top:161px;font-size:14px;line-height:18px;font-weight:bold;color:#4a4b4f;white-space:nowrap">章节</div><div class="abs" style="left:59px;top:156px;width:25px;height:25px;border-radius:50%;border:1.500px solid #77787c;background:#f5f6fa;font-size:14px;font-weight:bold;line-height:23.500px;text-align:center;color:#55565a">1</div><div class="abs" style="left:100px;top:161px;font-size:14px;line-height:18px;font-weight:bold;color:#4a4b4f;white-space:nowrap">Java学习指南</div><div class="abs" style="left:12px;top:200px;font-size:12px;line-height:16px;color:#9c9da0;white-space:nowrap;">课时1</div><div class="abs" style="left:65px;top:201px;width:14px;height:14px;border-radius:50%;border:1.500px solid #c2c3c6;background:#f5f6fa"></div><div class="abs" style="left:88px;top:200px;font-size:12px;line-height:16px;color:#9c9da0;white-space:nowrap;">Java学习指南</div><div class="abs" style="left:224px;top:200px;width:50px;text-align:right;font-size:12px;line-height:16px;color:#b4b5b8;white-space:nowrap">89:24</div><svg class="abs" style="left:278px;top:203px" width="13" height="13" viewBox="0 0 13 13"><rect x="1" y="1" width="11" height="11" fill="none" stroke="#a2a3a6" stroke-width="1.600"/><path d="M4.500 3.500v6l4.500-3z" fill="#a2a3a6"/></svg><div class="abs" style="left:12px;top:247px;font-size:14px;line-height:18px;font-weight:bold;color:#4a4b4f;white-space:nowrap">章节</div><div class="abs" style="left:59px;top:242px;width:25px;height:25px;border-radius:50%;border:1.500px solid #77787c;background:#f5f6fa;font-size:14px;font-weight:bold;line-height:23.500px;text-align:center;color:#55565a">2</div><div class="abs" style="left:100px;top:247px;font-size:14px;line-height:18px;font-weight:bold;color:#4a4b4f;white-space:nowrap">揭开Java的神秘面纱</div><div class="abs" style="left:12px;top:286px;font-size:12px;line-height:16px;color:#9c9da0;white-space:nowrap;">课时2</div><div class="abs" style="left:65px;top:287px;width:14px;height:14px;border-radius:50%;border:1.500px solid #c2c3c6;background:#f5f6fa"></div><div class="abs" style="left:85px;top:286px;font-size:12px;line-height:16px;color:#9c9da0;white-space:nowrap;">Java开发环境</div><div class="abs" style="left:224px;top:286px;width:50px;text-align:right;font-size:12px;line-height:16px;color:#b4b5b8;white-space:nowrap">01:44</div><svg class="abs" style="left:278px;top:289px" width="13" height="13" viewBox="0 0 13 13"><rect x="1" y="1" width="11" height="11" fill="none" stroke="#a2a3a6" stroke-width="1.600"/><path d="M4.500 3.500v6l4.500-3z" fill="#a2a3a6"/></svg><div class="abs" style="left:12px;top:322px;font-size:12px;line-height:16px;color:#9c9da0;white-space:nowrap;">课时3</div><div class="abs" style="left:65px;top:323px;width:14px;height:14px;border-radius:50%;border:1.500px solid #c2c3c6;background:#f5f6fa"></div><div class="abs" style="left:85px;top:322px;font-size:12px;line-height:16px;color:#9c9da0;white-space:nowrap;">安装Java开发工具箱</div><div class="abs" style="left:224px;top:322px;width:50px;text-align:right;font-size:12px;line-height:16px;color:#b4b5b8;white-space:nowrap">12:44</div><svg class="abs" style="left:278px;top:325px" width="13" height="13" viewBox="0 0 13 13"><rect x="1" y="1" width="11" height="11" fill="none" stroke="#a2a3a6" stroke-width="1.600"/><path d="M4.500 3.500v6l4.500-3z" fill="#a2a3a6"/></svg><div class="abs" style="left:12px;top:358px;font-size:12px;line-height:16px;color:#9c9da0;white-space:nowrap;">课时4</div><div class="abs" style="left:65px;top:359px;width:14px;height:14px;border-radius:50%;border:1.500px solid #c2c3c6;background:#f5f6fa"></div><div class="abs" style="left:85px;top:358px;font-size:12px;line-height:16px;color:#9c9da0;white-space:nowrap;">磨刀不误砍柴工——...</div><div class="abs" style="left:224px;top:358px;width:50px;text-align:right;font-size:12px;line-height:16px;color:#b4b5b8;white-space:nowrap">43:42</div><svg class="abs" style="left:278px;top:361px" width="13" height="13" viewBox="0 0 13 13"><rect x="1" y="1" width="11" height="11" fill="none" stroke="#a2a3a6" stroke-width="1.600"/><path d="M4.500 3.500v6l4.500-3z" fill="#a2a3a6"/></svg><div class="abs" style="left:12px;top:394px;font-size:12px;line-height:16px;color:#9c9da0;white-space:nowrap;">课时5</div><div class="abs" style="left:65px;top:395px;width:14px;height:14px;border-radius:50%;border:1.500px solid #c2c3c6;background:#f5f6fa"></div><div class="abs" style="left:85px;top:394px;font-size:12px;line-height:16px;color:#9c9da0;white-space:nowrap;">享受安装成果——开...</div><div class="abs" style="left:224px;top:394px;width:50px;text-align:right;font-size:12px;line-height:16px;color:#b4b5b8;white-space:nowrap">17:40</div><svg class="abs" style="left:278px;top:397px" width="13" height="13" viewBox="0 0 13 13"><rect x="1" y="1" width="11" height="11" fill="none" stroke="#a2a3a6" stroke-width="1.600"/><path d="M4.500 3.500v6l4.500-3z" fill="#a2a3a6"/></svg><div class="abs" style="left:12px;top:430px;font-size:12px;line-height:16px;color:#9c9da0;white-space:nowrap;">课时6</div><div class="abs" style="left:65px;top:431px;width:14px;height:14px;border-radius:50%;border:1.500px solid #c2c3c6;background:#f5f6fa"></div><div class="abs" style="left:85px;top:430px;font-size:12px;line-height:16px;color:#9c9da0;white-space:nowrap;">探秘Java虚拟机（J...</div><div class="abs" style="left:224px;top:430px;width:50px;text-align:right;font-size:12px;line-height:16px;color:#b4b5b8;white-space:nowrap">09:21</div><svg class="abs" style="left:278px;top:433px" width="13" height="13" viewBox="0 0 13 13"><rect x="1" y="1" width="11" height="11" fill="none" stroke="#a2a3a6" stroke-width="1.600"/><path d="M4.500 3.500v6l4.500-3z" fill="#a2a3a6"/></svg><div class="abs" style="left:12px;top:466px;font-size:12px;line-height:16px;color:#9c9da0;white-space:nowrap;">课时7</div><div class="abs" style="left:65px;top:467px;width:14px;height:14px;border-radius:50%;border:1.500px solid #c2c3c6;background:#f5f6fa"></div><div class="abs" style="left:85px;top:466px;font-size:12px;line-height:16px;color:#9c9da0;white-space:nowrap;">高手点拨</div><div class="abs" style="left:224px;top:466px;width:50px;text-align:right;font-size:12px;line-height:16px;color:#b4b5b8;white-space:nowrap">04:32</div><svg class="abs" style="left:278px;top:469px" width="13" height="13" viewBox="0 0 13 13"><rect x="1" y="1" width="11" height="11" fill="none" stroke="#a2a3a6" stroke-width="1.600"/><path d="M4.500 3.500v6l4.500-3z" fill="#a2a3a6"/></svg><div class="abs" style="left:12px;top:502px;font-size:12px;line-height:16px;color:#9c9da0;white-space:nowrap;">课时8</div><div class="abs" style="left:65px;top:503px;width:14px;height:14px;border-radius:50%;border:1.500px solid #c2c3c6;background:#f5f6fa"></div><div class="abs" style="left:85px;top:502px;font-size:12px;line-height:16px;color:#9c9da0;white-space:nowrap;">实战练习</div><div class="abs" style="left:224px;top:502px;width:50px;text-align:right;font-size:12px;line-height:16px;color:#b4b5b8;white-space:nowrap">15:08</div><svg class="abs" style="left:278px;top:505px" width="13" height="13" viewBox="0 0 13 13"><rect x="1" y="1" width="11" height="11" fill="none" stroke="#a2a3a6" stroke-width="1.600"/><path d="M4.500 3.500v6l4.500-3z" fill="#a2a3a6"/></svg><div class="abs" style="left:12px;top:549px;font-size:14px;line-height:18px;font-weight:bold;color:#4a4b4f;white-space:nowrap">章节</div><div class="abs" style="left:59px;top:544px;width:25px;height:25px;border-radius:50%;border:1.500px solid #77787c;background:#f5f6fa;font-size:14px;font-weight:bold;line-height:23.500px;text-align:center;color:#55565a">3</div><div class="abs" style="left:96px;top:549px;font-size:14px;line-height:18px;font-weight:bold;color:#4a4b4f;white-space:nowrap">流行的Java开发工具— Ecl...</div><div class="abs" style="left:12px;top:588px;font-size:12px;line-height:16px;color:#9c9da0;white-space:nowrap;">课时9</div><div class="abs" style="left:65px;top:589px;width:14px;height:14px;border-radius:50%;border:1.500px solid #c2c3c6;background:#f5f6fa"></div><div class="abs" style="left:85px;top:588px;font-size:12px;line-height:16px;color:#9c9da0;white-space:nowrap;">认识Eclipse开发工具</div><div class="abs" style="left:224px;top:588px;width:50px;text-align:right;font-size:12px;line-height:16px;color:#b4b5b8;white-space:nowrap">43:35</div><svg class="abs" style="left:278px;top:591px" width="13" height="13" viewBox="0 0 13 13"><rect x="1" y="1" width="11" height="11" fill="none" stroke="#a2a3a6" stroke-width="1.600"/><path d="M4.500 3.500v6l4.500-3z" fill="#a2a3a6"/></svg><div class="abs" style="left:12px;top:624px;font-size:12px;line-height:16px;color:#9c9da0;white-space:nowrap;">课时10</div><div class="abs" style="left:65px;top:625px;width:14px;height:14px;border-radius:50%;border:1.500px solid #c2c3c6;background:#f5f6fa"></div><div class="abs" style="left:85px;top:624px;font-size:12px;line-height:16px;color:#9c9da0;white-space:nowrap;">使用Eclipse开始工作</div><div class="abs" style="left:224px;top:624px;width:50px;text-align:right;font-size:12px;line-height:16px;color:#b4b5b8;white-space:nowrap">19:44</div><svg class="abs" style="left:278px;top:627px" width="13" height="13" viewBox="0 0 13 13"><rect x="1" y="1" width="11" height="11" fill="none" stroke="#a2a3a6" stroke-width="1.600"/><path d="M4.500 3.500v6l4.500-3z" fill="#a2a3a6"/></svg><div class="abs" style="left:12px;top:660px;font-size:12px;line-height:16px;color:#9c9da0;white-space:nowrap;">课时11</div><div class="abs" style="left:65px;top:661px;width:14px;height:14px;border-radius:50%;border:1.500px solid #c2c3c6;background:#f5f6fa"></div><div class="abs" style="left:85px;top:660px;font-size:12px;line-height:16px;color:#9c9da0;white-space:nowrap;">在Eclipse中调试程序</div><div class="abs" style="left:224px;top:660px;width:50px;text-align:right;font-size:12px;line-height:16px;color:#b4b5b8;white-space:nowrap">06:20</div><svg class="abs" style="left:278px;top:663px" width="13" height="13" viewBox="0 0 13 13"><rect x="1" y="1" width="11" height="11" fill="none" stroke="#a2a3a6" stroke-width="1.600"/><path d="M4.500 3.500v6l4.500-3z" fill="#a2a3a6"/></svg><div class="abs" style="left:12px;top:696px;font-size:12px;line-height:16px;color:#9c9da0;white-space:nowrap;">课时12</div><div class="abs" style="left:65px;top:697px;width:14px;height:14px;border-radius:50%;border:1.500px solid #c2c3c6;background:#f5f6fa"></div><div class="abs" style="left:85px;top:696px;font-size:12px;line-height:16px;color:#9c9da0;white-space:nowrap;">高手点拨</div><div class="abs" style="left:224px;top:696px;width:50px;text-align:right;font-size:12px;line-height:16px;color:#b4b5b8;white-space:nowrap">02:44</div><svg class="abs" style="left:278px;top:699px" width="13" height="13" viewBox="0 0 13 13"><rect x="1" y="1" width="11" height="11" fill="none" stroke="#a2a3a6" stroke-width="1.600"/><path d="M4.500 3.500v6l4.500-3z" fill="#a2a3a6"/></svg><div class="abs" style="left:12px;top:732px;font-size:12px;line-height:16px;color:#9c9da0;white-space:nowrap;">课时13</div><div class="abs" style="left:65px;top:733px;width:14px;height:14px;border-radius:50%;border:1.500px solid #c2c3c6;background:#f5f6fa"></div><div class="abs" style="left:85px;top:732px;font-size:12px;line-height:16px;color:#9c9da0;white-space:nowrap;">实战练习</div><div class="abs" style="left:224px;top:732px;width:50px;text-align:right;font-size:12px;line-height:16px;color:#b4b5b8;white-space:nowrap">05:26</div><svg class="abs" style="left:278px;top:735px" width="13" height="13" viewBox="0 0 13 13"><rect x="1" y="1" width="11" height="11" fill="none" stroke="#a2a3a6" stroke-width="1.600"/><path d="M4.500 3.500v6l4.500-3z" fill="#a2a3a6"/></svg><div class="abs" style="left:12px;top:779px;font-size:14px;line-height:18px;font-weight:bold;color:#4a4b4f;white-space:nowrap">章节</div><div class="abs" style="left:59px;top:774px;width:25px;height:25px;border-radius:50%;border:1.500px solid #77787c;background:#f5f6fa;font-size:14px;font-weight:bold;line-height:23.500px;text-align:center;color:#55565a">4</div><div class="abs" style="left:96px;top:779px;font-size:14px;line-height:18px;font-weight:bold;color:#4a4b4f;white-space:nowrap">初识庐山真面目—Java程...</div><div class="abs" style="left:0;top:808px;width:303px;height:36px;background:#333642"></div><div class="abs" style="left:12px;top:818px;font-size:12px;line-height:16px;color:#fff;white-space:nowrap;font-weight:bold;">课时14</div><div class="abs" style="left:65px;top:819px;width:14px;height:14px;border-radius:50%;border:1.500px solid #fff;background:#333642"></div><div class="abs" style="left:85px;top:818px;font-size:12px;line-height:16px;color:#fff;white-space:nowrap;font-weight:bold;">一个简单的例子</div><div class="abs" style="left:224px;top:818px;width:50px;text-align:right;font-size:12px;line-height:16px;color:#e8e8e8;white-space:nowrap">15:17</div><svg class="abs" style="left:278px;top:821px" width="13" height="13" viewBox="0 0 13 13"><rect x="1" y="1" width="11" height="11" fill="none" stroke="#d8d8d8" stroke-width="1.600"/><path d="M4.500 3.500v6l4.500-3z" fill="#d8d8d8"/></svg><div class="abs" style="left:12px;top:854px;font-size:12px;line-height:16px;color:#9c9da0;white-space:nowrap;">课时15</div><div class="abs" style="left:65px;top:855px;width:14px;height:14px;border-radius:50%;border:1.500px solid #c2c3c6;background:#f5f6fa"></div><div class="abs" style="left:85px;top:854px;font-size:12px;line-height:16px;color:#9c9da0;white-space:nowrap;">感性认识Java程序</div><div class="abs" style="left:224px;top:854px;width:50px;text-align:right;font-size:12px;line-height:16px;color:#b4b5b8;white-space:nowrap">53:56</div><svg class="abs" style="left:278px;top:857px" width="13" height="13" viewBox="0 0 13 13"><rect x="1" y="1" width="11" height="11" fill="none" stroke="#a2a3a6" stroke-width="1.600"/><path d="M4.500 3.500v6l4.500-3z" fill="#a2a3a6"/></svg><div class="abs" style="left:12px;top:890px;font-size:12px;line-height:16px;color:#9c9da0;white-space:nowrap;">课时16</div><div class="abs" style="left:65px;top:891px;width:14px;height:14px;border-radius:50%;border:1.500px solid #c2c3c6;background:#f5f6fa"></div><div class="abs" style="left:85px;top:890px;font-size:12px;line-height:16px;color:#9c9da0;white-space:nowrap;">程序的检测</div><div class="abs" style="left:224px;top:890px;width:50px;text-align:right;font-size:12px;line-height:16px;color:#b4b5b8;white-space:nowrap">06:03</div><svg class="abs" style="left:278px;top:893px" width="13" height="13" viewBox="0 0 13 13"><rect x="1" y="1" width="11" height="11" fill="none" stroke="#a2a3a6" stroke-width="1.600"/><path d="M4.500 3.500v6l4.500-3z" fill="#a2a3a6"/></svg></div>
</div>
</body>
</html>
